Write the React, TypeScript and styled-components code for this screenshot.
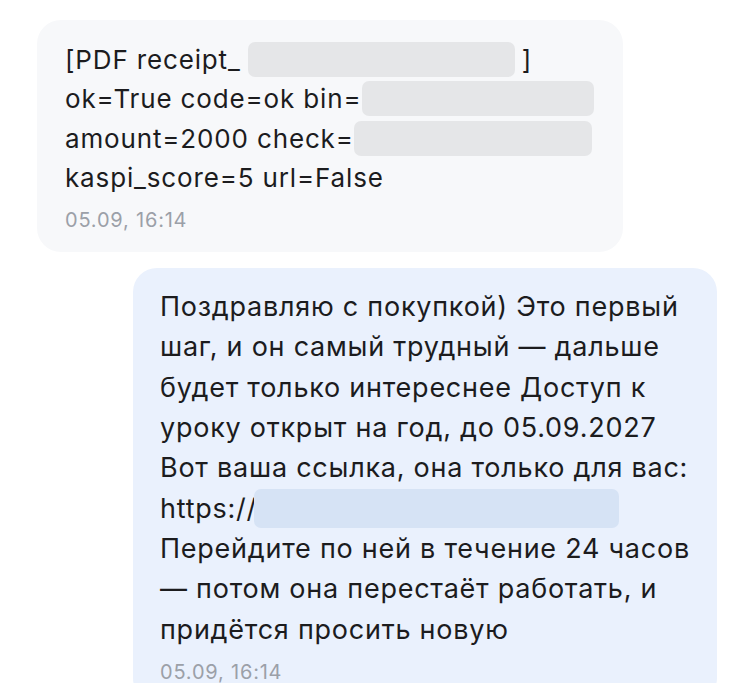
import styled, { createGlobalStyle } from 'styled-components';

const GlobalStyle = createGlobalStyle`
  html, body {
    margin: 0;
    padding: 0;
    background: #ffffff;
  }
  body {
    font-family: Inter, "Noto Sans", "Liberation Sans", sans-serif;
    color: #1c1c1e;
  }
`;

const Page = styled.main`
  display: flex;
  flex-direction: column;
  width: 734px;
  height: 683px;
  overflow: hidden;
  padding: 20px 17px 0 37px;
  box-sizing: border-box;
  gap: 16px;
`;

const Bubble = styled.div<{ $mine?: boolean }>`
  align-self: ${({ $mine }) => ($mine ? 'flex-end' : 'flex-start')};
  width: ${({ $mine }) => ($mine ? '584px' : '586px')};
  box-sizing: border-box;
  padding: ${({ $mine }) => ($mine ? '19px 20px 20px 27px' : '20px 20px 22px 28px')};
  border-radius: 24px;
  background-color: ${({ $mine }) => ($mine ? '#eaf1fd' : '#f7f8fa')};
  flex-shrink: 0;
`;

const Body = styled.div<{ $mine?: boolean }>`
  font-size: ${({ $mine }) => ($mine ? '27px' : '26px')};
  line-height: ${({ $mine }) => ($mine ? '40.3px' : '39.3px')};
  letter-spacing: ${({ $mine }) => ($mine ? '0.75px' : '0.85px')};
  white-space: pre-line;
`;

const Line = styled.div`
  display: flex;
  align-items: center;
  white-space: nowrap;
`;

const Redacted = styled.span<{ $mine?: boolean; $gap?: number }>`
  display: inline-block;
  flex-shrink: 0;
  margin-left: ${({ $gap }) => $gap ?? 0}px;
  height: ${({ $mine }) => ($mine ? '39px' : '35px')};
  border-radius: 7px;
  background-color: ${({ $mine }) => ($mine ? '#d6e3f5' : '#e5e6e8')};
`;

const Time = styled.div<{ $mine?: boolean }>`
  margin-top: ${({ $mine }) => ($mine ? '12px' : '13px')};
  font-size: 20px;
  line-height: 20px;
  letter-spacing: 0.8px;
  color: #9ba0a8;
`;

export default function App() {
  return (
    <>
      <GlobalStyle />
      <Page>
        <Bubble>
          <Body>
            <Line>
              [PDF receipt_
              <Redacted $gap={7} style={{ width: 267 }} />
              <span style={{ marginLeft: 7 }}>]</span>
            </Line>
            <Line>
              ok=True code=ok bin=
              <Redacted style={{ width: 232 }} />
            </Line>
            <Line>
              amount=2000 check=
              <Redacted style={{ width: 238 }} />
            </Line>
            <Line>kaspi_score=5 url=False</Line>
          </Body>
          <Time>05.09, 16:14</Time>
        </Bubble>

        <Bubble $mine>
          <Body $mine>
            {'Поздравляю с покупкой) Это первый\nшаг, и он самый трудный — дальше\nбудет только интереснее Доступ к\nуроку открыт на год, до 05.09.2027\nВот ваша ссылка, она только для вас:'}
            <Line>
              https://
              <Redacted $mine $gap={-3} style={{ width: 365 }} />
            </Line>
            {'Перейдите по ней в течение 24 часов\n— потом она перестаёт работать, и\nпридётся просить новую'}
          </Body>
          <Time $mine>05.09, 16:14</Time>
        </Bubble>
      </Page>
    </>
  );
}
